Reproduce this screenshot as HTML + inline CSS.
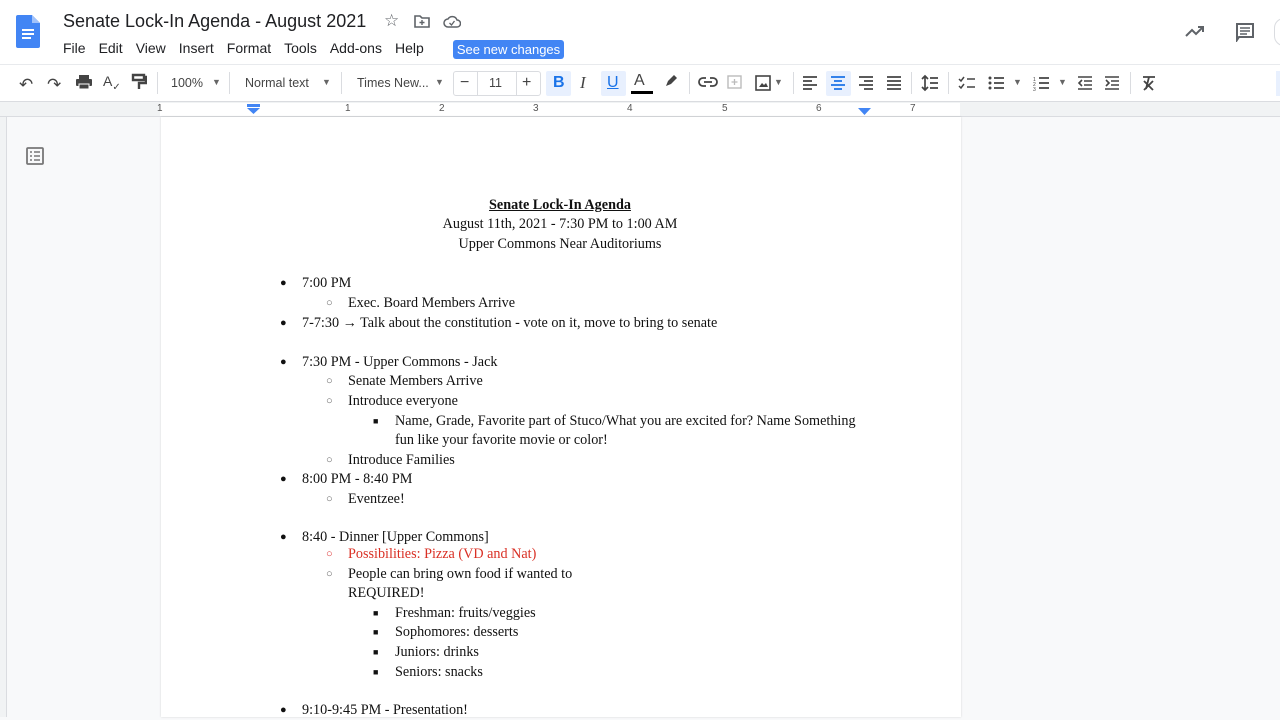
<!DOCTYPE html>
<html><head><meta charset="utf-8"><style>
*{margin:0;padding:0;box-sizing:border-box}
body{width:1280px;height:714px;overflow:hidden;background:#f8f9fa;font-family:"Liberation Sans",Arial,sans-serif;position:relative}
.top{position:absolute;left:0;top:0;width:1280px;height:64px;background:#fff}
.tb{position:absolute;left:0;top:64px;width:1280px;height:38px;background:#fff;border-top:1px solid #e8eaed;border-bottom:1px solid #dadce0}
.ruler{position:absolute;left:0;top:102px;width:1280px;height:15px;background:#f1f3f4;border-bottom:1px solid #dadce0}
.page{position:absolute;left:161px;top:117px;width:800px;height:600px;background:#fff;box-shadow:0 0 2px rgba(0,0,0,.15)}
.a{position:absolute;white-space:nowrap}
.t{position:absolute;font-family:"Liberation Serif","Times New Roman",serif;font-size:14.2px;color:#111;line-height:20px;white-space:nowrap;margin-top:1px}
.b{font-size:11px}
.menu span{margin-right:13px}
.ic{position:absolute;top:73px}
.sep{position:absolute;top:72px;width:1px;height:22px;background:#dadce0}
.rn{position:absolute;top:103px;font-size:10px;color:#555}
</style></head><body>
<div class="top">
<svg class="a" style="left:16px;top:15px" width="24" height="33" viewBox="0 0 24 33"><path d="M2 0h14l8 8v23a2 2 0 0 1-2 2H2a2 2 0 0 1-2-2V2a2 2 0 0 1 2-2z" fill="#4285f4"/><path d="M16 0v8h8z" fill="#a1c2fa"/><rect x="6" y="14" width="12" height="2" fill="#fff"/><rect x="6" y="18" width="12" height="2" fill="#fff"/><rect x="6" y="22" width="9" height="2" fill="#fff"/></svg>
<div class="a" style="left:63px;top:11px;font-size:18px;color:#202124">Senate Lock-In Agenda - August 2021</div>
<div class="a" style="left:384px;top:11px;font-size:17px;color:#5f6368">☆</div>
<svg class="a" style="left:414px;top:14px" width="16" height="14"><path d="M1 2h5l2 2h7v9H1z" fill="none" stroke="#5f6368" stroke-width="1.6"/><path d="M8 6v5M5.5 8.5h5" stroke="#5f6368" stroke-width="1.4"/></svg>
<svg class="a" style="left:443px;top:14px" width="18" height="14"><path d="M5 13a4 4 0 0 1 0-8 5 5 0 0 1 9 1 3.5 3.5 0 0 1 0 7z" fill="none" stroke="#5f6368" stroke-width="1.5"/><path d="M6.5 9l2 2 3-4" fill="none" stroke="#5f6368" stroke-width="1.3"/></svg>
<div class="a menu" style="left:63px;top:40px;font-size:14px;color:#202124"><span>File</span><span>Edit</span><span>View</span><span>Insert</span><span>Format</span><span>Tools</span><span>Add-ons</span><span>Help</span></div>
<div class="a" style="left:453px;top:40px;width:111px;height:19px;background:#4285f4;border-radius:3px;color:#fff;font-size:13px;text-align:center;line-height:19px">See new changes</div>
<svg class="a" style="left:1185px;top:24px" width="20" height="14"><path d="M1 12l6-6 4 4 7-7M13 3h5v5" fill="none" stroke="#5f6368" stroke-width="2"/></svg>
<svg class="a" style="left:1235px;top:22px" width="20" height="20"><path d="M2 2h16v13h-14l-2 3z" fill="none" stroke="#5f6368" stroke-width="2"/><path d="M5 6h10M5 9h10M5 12h7" stroke="#5f6368" stroke-width="1.5"/></svg>
<div class="a" style="left:1274px;top:18px;width:20px;height:28px;border:1px solid #dadce0;border-radius:14px"></div>
</div>
<div class="tb"></div>
<div class="a" style="left:19px;top:75px;font-size:17px;color:#444">↶</div>
<div class="a" style="left:47px;top:75px;font-size:17px;color:#444">↷</div>
<svg class="ic" style="left:75px" width="18" height="18"><rect x="4" y="2" width="10" height="4" fill="#444"/><rect x="1" y="6" width="16" height="7" rx="1" fill="#444"/><rect x="4" y="11" width="10" height="5" fill="#444" stroke="#fff"/></svg>
<div class="a" style="left:103px;top:73px;font-size:14px;color:#444">A<sub style="font-size:10px">✓</sub></div>
<svg class="ic" style="left:131px" width="16" height="18"><path d="M2 2h11v5H2zM13 4h2v6H8v6" fill="none" stroke="#444" stroke-width="2.4"/></svg>
<div class="sep" style="left:157px"></div>
<div class="a" style="left:171px;top:76px;font-size:12.5px;color:#444">100%</div><div class="a" style="left:212px;top:77px;font-size:9px;color:#666">▼</div>
<div class="sep" style="left:229px"></div>
<div class="a" style="left:245px;top:76px;font-size:12.5px;color:#444">Normal text</div><div class="a" style="left:322px;top:77px;font-size:9px;color:#666">▼</div>
<div class="sep" style="left:341px"></div>
<div class="a" style="left:357px;top:76px;font-size:12.5px;color:#444">Times New...</div><div class="a" style="left:435px;top:77px;font-size:9px;color:#666">▼</div>
<div class="a" style="left:453px;top:71px;width:88px;height:25px;border:1px solid #dadce0;border-radius:3px"></div>
<div class="a" style="left:477px;top:71px;width:1px;height:25px;background:#dadce0"></div><div class="a" style="left:516px;top:71px;width:1px;height:25px;background:#dadce0"></div>
<div class="a" style="left:460px;top:74px;font-size:16px;color:#444">−</div>
<div class="a" style="left:489px;top:76px;font-size:12.5px;color:#444">11</div>
<div class="a" style="left:522px;top:74px;font-size:16px;color:#444">+</div>
<div class="a" style="left:546px;top:71px;width:25px;height:25px;background:#e8f0fe;border-radius:2px"></div>
<div class="a" style="left:553px;top:74px;font-size:16px;font-weight:bold;color:#1a73e8">B</div>
<div class="a" style="left:580px;top:73px;font-size:17px;font-style:italic;font-family:'Liberation Serif',serif;color:#444">I</div>
<div class="a" style="left:601px;top:71px;width:25px;height:25px;background:#e8f0fe;border-radius:2px"></div>
<div class="a" style="left:607px;top:74px;font-size:16px;text-decoration:underline;color:#1a73e8">U</div>
<div class="a" style="left:634px;top:72px;font-size:16px;color:#444">A</div><div class="a" style="left:631px;top:91px;width:22px;height:3px;background:#000"></div>
<svg class="ic" style="left:663px" width="16" height="16"><path d="M3 13l2-5 6-6 3 3-6 6z" fill="#444"/></svg>
<div class="sep" style="left:689px"></div>
<svg class="ic" style="left:698px;top:76px" width="20" height="12"><path d="M8 2H5a4 4 0 0 0 0 8h3M12 2h3a4 4 0 0 1 0 8h-3M6 6h8" fill="none" stroke="#444" stroke-width="1.8"/></svg>
<svg class="ic" style="left:727px;top:75px" width="16" height="16"><rect x="1" y="1" width="13" height="12" fill="none" stroke="#bbb" stroke-width="1.4"/><path d="M7.5 4v6M4.5 7h6" stroke="#bbb" stroke-width="1.3"/></svg>
<svg class="ic" style="left:755px;top:75px" width="16" height="16"><rect x="1" y="1" width="14" height="14" fill="none" stroke="#444" stroke-width="1.6"/><path d="M4 12l3-4 2 2 2-2 2 4z" fill="#444"/></svg>
<div class="a" style="left:774px;top:77px;font-size:9px;color:#666">▼</div>
<div class="sep" style="left:793px"></div>
<svg class="ic" style="left:802px;top:75px" width="16" height="16"><path d="M1 2h14M1 6h9M1 10h14M1 14h9" stroke="#444" stroke-width="1.8"/></svg>
<div class="a" style="left:826px;top:71px;width:25px;height:25px;background:#e8f0fe;border-radius:2px"></div>
<svg class="ic" style="left:830px;top:75px" width="16" height="16"><path d="M1 2h14M4 6h8M1 10h14M4 14h8" stroke="#1a73e8" stroke-width="1.8"/></svg>
<svg class="ic" style="left:858px;top:75px" width="16" height="16"><path d="M1 2h14M6 6h9M1 10h14M6 14h9" stroke="#444" stroke-width="1.8"/></svg>
<svg class="ic" style="left:886px;top:75px" width="16" height="16"><path d="M1 2h14M1 6h14M1 10h14M1 14h14" stroke="#444" stroke-width="1.8"/></svg>
<div class="sep" style="left:911px"></div>
<svg class="ic" style="left:921px;top:74px" width="18" height="18"><path d="M4 2v14M1 5l3-3 3 3M1 13l3 3 3-3M9 4h8M9 9h8M9 14h8" fill="none" stroke="#444" stroke-width="1.7"/></svg>
<div class="sep" style="left:948px"></div>
<svg class="ic" style="left:958px;top:75px" width="18" height="16"><path d="M1 4l2 2 3-4M1 11l2 2 3-4M9 4h8M9 12h8" fill="none" stroke="#444" stroke-width="1.5"/></svg>
<svg class="ic" style="left:988px;top:75px" width="16" height="16"><circle cx="2" cy="3" r="1.5" fill="#444"/><circle cx="2" cy="8" r="1.5" fill="#444"/><circle cx="2" cy="13" r="1.5" fill="#444"/><path d="M6 3h10M6 8h10M6 13h10" stroke="#444" stroke-width="1.7"/></svg>
<div class="a" style="left:1013px;top:77px;font-size:9px;color:#666">▼</div>
<svg class="ic" style="left:1033px;top:75px" width="16" height="16"><path d="M6 3h10M6 8h10M6 13h10" stroke="#444" stroke-width="1.7"/><text x="0" y="6" font-size="5" fill="#444">1</text><text x="0" y="11" font-size="5" fill="#444">2</text><text x="0" y="16" font-size="5" fill="#444">3</text></svg>
<div class="a" style="left:1058px;top:77px;font-size:9px;color:#666">▼</div>
<svg class="ic" style="left:1077px;top:75px" width="16" height="16"><path d="M1 2h14M7 6h8M7 10h8M1 14h14M5 5L2 8l3 3" fill="none" stroke="#444" stroke-width="1.6"/></svg>
<svg class="ic" style="left:1104px;top:75px" width="16" height="16"><path d="M1 2h14M7 6h8M7 10h8M1 14h14M2 5l3 3-3 3" fill="none" stroke="#444" stroke-width="1.6"/></svg>
<div class="sep" style="left:1130px"></div>
<svg class="ic" style="left:1141px;top:75px" width="16" height="16"><path d="M2 2h12M8 2L5 14M3 6l9 9M12 6l-9 9" fill="none" stroke="#444" stroke-width="1.8"/></svg>
<div class="a" style="left:1276px;top:71px;width:10px;height:25px;background:#e8f0fe"></div>
<div class="ruler"></div>
<div class="a" style="left:160px;top:103px;width:800px;height:13px;background:#fff"></div>
<div class="a" style="left:0;top:117px;width:7px;height:600px;background:#f1f3f4;border-right:1px solid #dadce0"></div>
<div class="rn" style="left:157px">1</div><div class="rn" style="left:345px">1</div><div class="rn" style="left:439px">2</div><div class="rn" style="left:533px">3</div><div class="rn" style="left:627px">4</div><div class="rn" style="left:722px">5</div><div class="rn" style="left:816px">6</div><div class="rn" style="left:910px">7</div>
<svg class="a" style="left:247px;top:104px" width="13" height="11"><rect x="0" y="0" width="13" height="3" fill="#4285f4"/><path d="M0 4h13l-6.5 6z" fill="#4285f4"/></svg>
<svg class="a" style="left:858px;top:108px" width="13" height="8"><path d="M0 0h13l-6.5 7z" fill="#4285f4"/></svg>
<svg class="a" style="left:26px;top:147px" width="18" height="18"><rect x="1" y="1" width="16" height="16" rx="1" fill="none" stroke="#777" stroke-width="1.8"/><path d="M4 5h2M8 5h6M4 9h2M8 9h6M4 13h2M8 13h6" stroke="#777" stroke-width="1.5"/></svg>
<div class="page"></div>

<div class="t" style="left:0;width:1120px;text-align:center;top:194px;font-weight:bold;text-decoration:underline">Senate Lock-In Agenda</div>
<div class="t" style="left:0;width:1120px;text-align:center;top:213px">August 11th, 2021 - 7:30 PM to 1:00 AM</div>
<div class="t" style="left:0;width:1120px;text-align:center;top:233px">Upper Commons Near Auditoriums</div>

<div class="t b" style="left:280px;top:272px">●</div><div class="t" style="left:302px;top:272px">7:00 PM</div>
<div class="t b" style="left:326px;top:292px;color:#666">○</div><div class="t" style="left:348px;top:292px">Exec. Board Members Arrive</div>
<div class="t b" style="left:280px;top:312px">●</div><div class="t" style="left:302px;top:312px">7-7:30 → Talk about the constitution - vote on it, move to bring to senate</div>
<div class="t b" style="left:280px;top:351px">●</div><div class="t" style="left:302px;top:351px">7:30 PM - Upper Commons - Jack</div>
<div class="t b" style="left:326px;top:370px;color:#666">○</div><div class="t" style="left:348px;top:370px">Senate Members Arrive</div>
<div class="t b" style="left:326px;top:390px;color:#666">○</div><div class="t" style="left:348px;top:390px">Introduce everyone</div>
<div class="t" style="left:373px;top:410px;font-size:9px">■</div><div class="t" style="left:395px;top:410px">Name, Grade, Favorite part of Stuco/What you are excited for? Name Something</div>
<div class="t" style="left:395px;top:429px">fun like your favorite movie or color!</div>
<div class="t b" style="left:326px;top:449px;color:#666">○</div><div class="t" style="left:348px;top:449px">Introduce Families</div>
<div class="t b" style="left:280px;top:468px">●</div><div class="t" style="left:302px;top:468px">8:00 PM - 8:40 PM</div>
<div class="t b" style="left:326px;top:488px;color:#666">○</div><div class="t" style="left:348px;top:488px">Eventzee!</div>
<div class="t b" style="left:280px;top:526px">●</div><div class="t" style="left:302px;top:526px">8:40 - Dinner [Upper Commons]</div>
<div class="t b" style="left:326px;top:543px;color:#d33">○</div><div class="t" style="left:348px;top:543px;color:#d93025">Possibilities: Pizza (VD and Nat)</div>
<div class="t b" style="left:326px;top:563px;color:#666">○</div><div class="t" style="left:348px;top:563px">People can bring own food if wanted to</div>
<div class="t" style="left:348px;top:582px">REQUIRED!</div>
<div class="t" style="left:373px;top:602px;font-size:9px">■</div><div class="t" style="left:395px;top:602px">Freshman: fruits/veggies</div>
<div class="t" style="left:373px;top:621px;font-size:9px">■</div><div class="t" style="left:395px;top:621px">Sophomores: desserts</div>
<div class="t" style="left:373px;top:641px;font-size:9px">■</div><div class="t" style="left:395px;top:641px">Juniors: drinks</div>
<div class="t" style="left:373px;top:661px;font-size:9px">■</div><div class="t" style="left:395px;top:661px">Seniors: snacks</div>
<div class="t b" style="left:280px;top:699px">●</div><div class="t" style="left:302px;top:699px">9:10-9:45 PM - Presentation!</div>
</body></html>
